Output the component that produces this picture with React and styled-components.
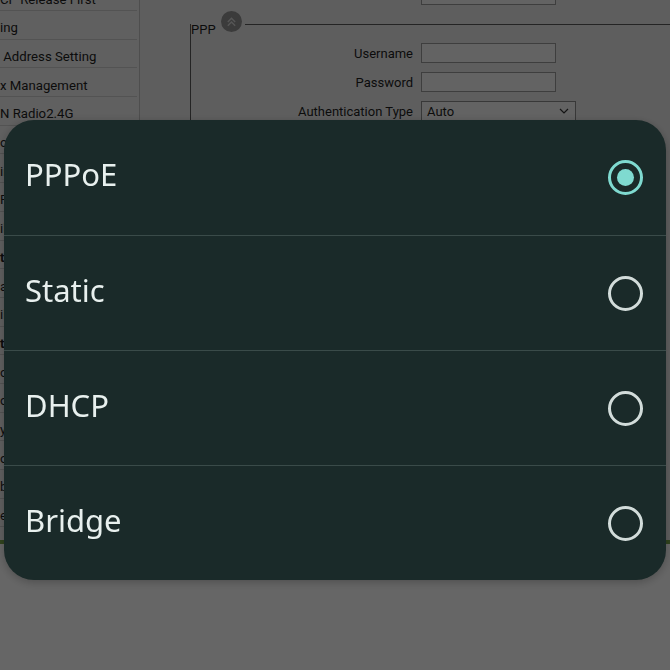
import React, { useState } from 'react';
import styled, { createGlobalStyle } from 'styled-components';

const GlobalStyle = createGlobalStyle`
  html, body {
    margin: 0;
    padding: 0;
  }
  body {
    width: 670px;
    height: 670px;
    overflow: hidden;
    background: #fff;
    font-family: Roboto, "Liberation Sans", sans-serif;
  }
`;

const Page = styled.div`
  width: 670px;
  height: 670px;
  display: flex;
  flex-direction: column;
  background: #fff;
`;

const Layout = styled.div`
  height: 540px;
  flex-shrink: 0;
  display: grid;
  grid-template-columns: 140px 1fr;
  background: #ececec;
  border-bottom: 4px solid #7aa84c;
  overflow: hidden;
`;

const Sidebar = styled.ul`
  list-style: none;
  margin: -17.7px 0 0;
  padding: 0;
  background: #f0f0f0;
  border-right: 1px solid #c2c2c2;
`;

const MenuItem = styled.li`
  box-sizing: border-box;
  height: 28.7px;
  display: flex;
  align-items: center;
  padding-top: 6px;
  margin-right: 2px;
  border-bottom: 1px solid #cfcfcf;
  font-size: 13.2px;
  font-weight: ${(p) => (p.$bold ? 700 : 400)};
  color: #1e1e1e;
  white-space: pre;
  overflow: hidden;
`;

const Main = styled.div`
  display: flex;
  flex-direction: column;
  padding-left: 50px;
`;

const TopRow = styled.div`
  display: grid;
  grid-template-columns: 223px 135px;
  column-gap: 8px;
  align-items: center;
  height: 20px;
  margin-top: -15px;
`;

const Label = styled.label`
  text-align: right;
  font-size: 13px;
  color: #1e1e1e;
  white-space: nowrap;
`;

const Input = styled.input`
  box-sizing: border-box;
  width: 135px;
  height: 20px;
  margin: 0;
  border: 1px solid #9c9c9c;
  background: #f7f7f7;
  font: 13px Roboto, sans-serif;
`;

const Fieldset = styled.fieldset`
  margin: 7px 0 0;
  padding: 7px 0 0;
  min-width: 0;
  height: 480px;
  border: 1px solid #5a5a5a;
  border-right: none;
  border-bottom: none;
`;

const Legend = styled.legend`
  display: flex;
  align-items: flex-end;
  gap: 5px;
  height: 24px;
  margin: 0;
  padding: 0 3px 0 0;
`;

const LegendText = styled.span`
  font-size: 13px;
  line-height: 12px;
  color: #1e1e1e;
`;

const CollapseIcon = styled.svg`
  align-self: flex-start;
  width: 21px;
  height: 21px;
  margin-top: -1px;
`;

const FormGrid = styled.div`
  display: grid;
  grid-template-columns: 222px auto;
  column-gap: 8px;
  row-gap: 9px;
  align-items: center;
  justify-items: start;

  & > label {
    justify-self: end;
  }
`;

const Select = styled.div`
  box-sizing: border-box;
  width: 155px;
  height: 20px;
  display: flex;
  align-items: center;
  justify-content: space-between;
  padding: 0 6px 0 5px;
  border: 1px solid #8c8c8c;
  background: #f7f7f7;
  font-size: 13px;
  color: #1e1e1e;
`;

const Backdrop = styled.div`
  position: fixed;
  inset: 0;
  box-sizing: border-box;
  padding: 120px 4px 0;
  background: rgba(0, 0, 0, 0.6);
  display: flex;
  align-items: flex-start;
`;

const Sheet = styled.div`
  flex: 1;
  background: #1a2a29;
  border-radius: 30px;
  overflow: hidden;
  box-shadow: 0 2px 10px rgba(0, 0, 0, 0.25);
`;

const Option = styled.div`
  box-sizing: border-box;
  height: 115px;
  display: flex;
  align-items: center;
  justify-content: space-between;
  padding: 0 23px 0 21px;
  cursor: pointer;

  & + & {
    border-top: 1px solid #3a4b49;
  }
`;

const OptionLabel = styled.span`
  margin-bottom: 7px;
  font-family: "Noto Sans", "Open Sans", sans-serif;
  font-size: 31px;
  color: #e8f0ee;
`;

const Radio = styled.span`
  box-sizing: border-box;
  width: 35px;
  height: 35px;
  border-radius: 50%;
  border: ${(p) => (p.$checked ? '3.5px solid #7fdad0' : '3px solid #d2dcda')};
  display: grid;
  place-items: center;

  &::after {
    content: '';
    width: 17px;
    height: 17px;
    border-radius: 50%;
    background: #7fdad0;
    display: ${(p) => (p.$checked ? 'block' : 'none')};
  }
`;

const menu = [
  { text: 'CP Release First' },
  { text: 'ing' },
  { text: ' Address Setting' },
  { text: 'x Management' },
  { text: 'N Radio2.4G' },
  { text: 'o' },
  { text: 'ime Setting' },
  { text: 'FTP Setting' },
  { text: 'ilter' },
  { text: 'tatus', bold: true },
  { text: 'arental Control' },
  { text: 'ilter' },
  { text: 'tatistics', bold: true },
  { text: 'ort Mapping' },
  { text: 'ools' },
  { text: 'ystem' },
  { text: 'ogout' },
  { text: 'bout' },
  { text: 'elp' },
];

const modes = ['PPPoE', 'Static', 'DHCP', 'Bridge'];

const App = () => {
  const [mode, setMode] = useState('PPPoE');

  return (
    <>
      <GlobalStyle />
      <Page>
        <Layout>
          <Sidebar>
            {menu.map((m, i) => (
              <MenuItem key={i} $bold={m.bold}>{m.text}</MenuItem>
            ))}
          </Sidebar>
          <Main>
            <TopRow>
              <Label>MTU</Label>
              <Input defaultValue="1492" />
            </TopRow>
            <Fieldset>
              <Legend>
                <LegendText>PPP</LegendText>
                <CollapseIcon viewBox="0 0 20 20">
                  <circle cx="10" cy="10" r="10" fill="#939393" />
                  <path d="M6.5 10.5 L10 7 L13.5 10.5 M6.5 14 L10 10.5 L13.5 14" fill="none" stroke="#d6d6d6" strokeWidth="1.4" />
                </CollapseIcon>
              </Legend>
              <FormGrid>
                <Label>Username</Label>
                <Input />
                <Label>Password</Label>
                <Input type="password" />
                <Label>Authentication Type</Label>
                <Select>
                  <span>Auto</span>
                  <svg width="10" height="6" viewBox="0 0 10 6">
                    <path d="M1 1 L5 5 L9 1" fill="none" stroke="#333" strokeWidth="1.2" />
                  </svg>
                </Select>
              </FormGrid>
            </Fieldset>
          </Main>
        </Layout>
      </Page>
      <Backdrop>
        <Sheet>
          {modes.map((m) => (
            <Option key={m} onClick={() => setMode(m)}>
              <OptionLabel>{m}</OptionLabel>
              <Radio $checked={mode === m} />
            </Option>
          ))}
        </Sheet>
      </Backdrop>
    </>
  );
};

export default App;
